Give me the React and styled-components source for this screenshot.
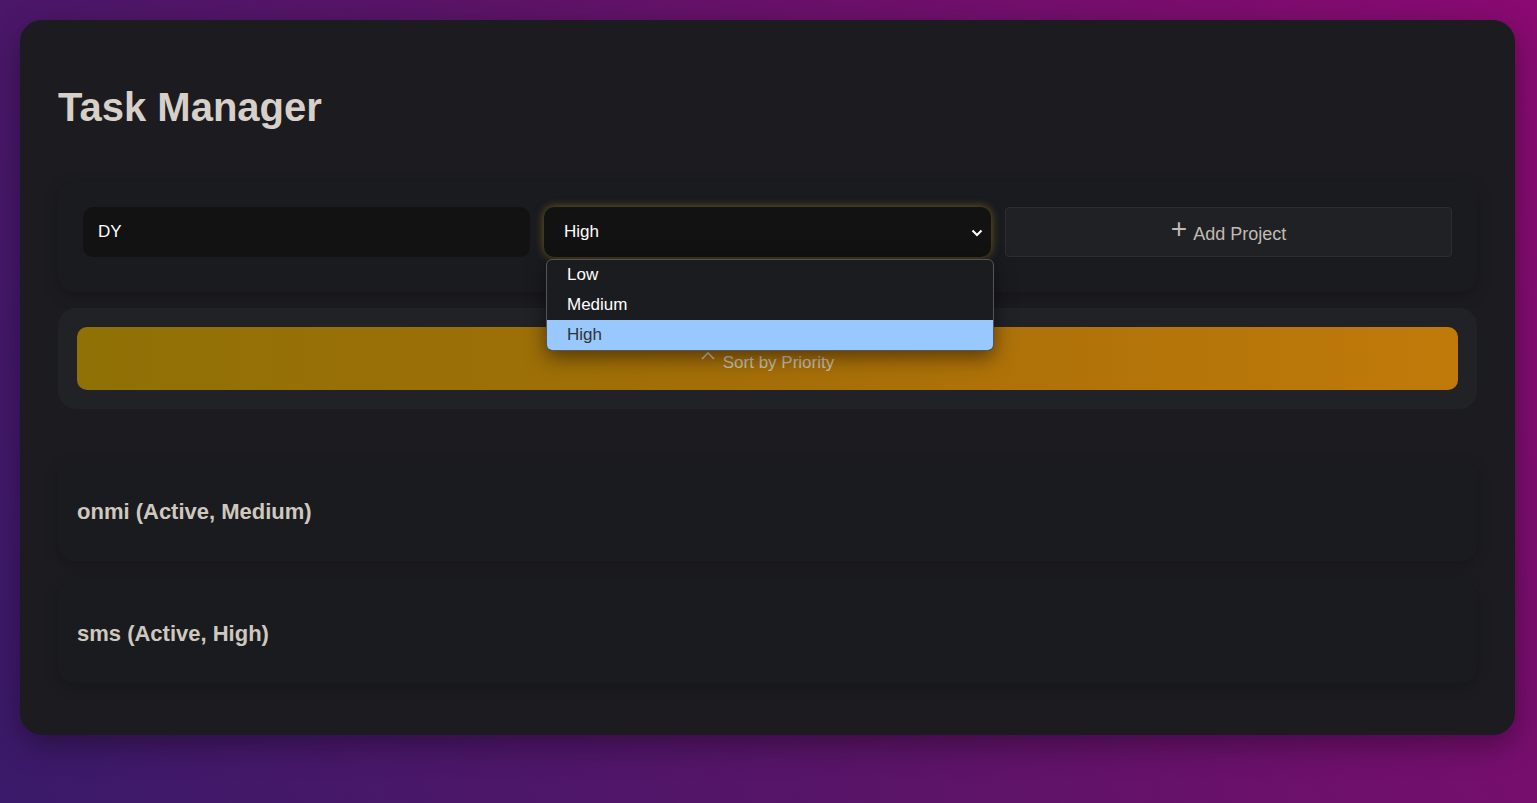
import React from 'react';
import styled, { createGlobalStyle } from 'styled-components';

const Global = createGlobalStyle`
  html, body { margin: 0; height: 100%; }
  body {
    font-family: "Liberation Sans", Arial, sans-serif;
    background: linear-gradient(60deg, #3a1a6a 0%, #5a1468 45%, #8a0a72 100%);
    min-height: 803px;
  }
  * { box-sizing: border-box; }
`;

const Page = styled.div`
  padding: 20px 22px 20px 20px;
`;

const Card = styled.div`
  background: #1c1b20;
  border-radius: 22px;
  padding: 40px 38px 52px;
  box-shadow: 0 10px 30px rgba(0,0,0,0.35);
`;

const Title = styled.h1`
  margin: 26px 0 54px 0;
  font-size: 40px;
  font-weight: 700;
  color: #d6d0c8;
  line-height: 42px;
`;

const Form = styled.div`
  background: #1a1b1e;
  border-radius: 16px;
  padding: 25px 25px 35px;
  display: grid;
  grid-template-columns: 1fr 1fr 1fr;
  gap: 14px;
  box-shadow: 0 4px 16px rgba(0,0,0,0.2);
`;

const Field = styled.div`
  height: 50px;
  border-radius: 10px;
  background: #121212;
  color: #fff;
  font-size: 17px;
  display: flex;
  align-items: center;
  padding: 0 15px;
  position: relative;
  ${p => p.focused && `box-shadow: 0 0 8px rgba(200,160,40,0.5); padding: 0 20px;`}
`;

const Chevron = styled.span`
  margin-left: auto;
  font-size: 13px;
  margin-right: -12px;
`;

const Menu = styled.div`
  position: absolute;
  top: 52px;
  left: 2px;
  right: -3px;
  background: #1b1c1f;
  border: 1px solid #555;
  border-radius: 6px;
  overflow: hidden;
  z-index: 5;
  box-shadow: 0 6px 20px rgba(0,0,0,0.5);
`;

const Option = styled.div`
  height: 30px;
  display: flex;
  align-items: center;
  padding: 0 20px;
  font-size: 17px;
  color: ${p => (p.active ? '#333' : '#fff')};
  background: ${p => (p.active ? '#99c8ff' : 'transparent')};
`;

const AddButton = styled.div`
  height: 50px;
  border: 1px solid #2c2e31;
  border-radius: 4px;
  background: #202124;
  color: #c2bbb2;
  font-size: 18px;
  display: flex;
  align-items: center;
  justify-content: center;
  gap: 6px;
  padding-top: 4px;
`;

const Plus = styled.span`
  font-size: 28px;
  font-weight: 300;
  margin-top: -10px;
`;

const SortPanel = styled.div`
  margin-top: 16px;
  background: #202225;
  border-radius: 18px;
  padding: 19px;
`;

const SortButton = styled.div`
  height: 63px;
  border-radius: 10px;
  background: linear-gradient(90deg, #8f7106 0%, #a56e08 50%, #c07a0a 100%);
  color: #c8c0b0;
  font-size: 17px;
  display: flex;
  align-items: center;
  justify-content: center;
  gap: 8px;
  padding-top: 8px;
`;

const List = styled.div`
  margin-top: 50px;
  display: flex;
  flex-direction: column;
  gap: 20px;
`;

const Project = styled.div`
  height: 102px;
  background: #1a1b1e;
  border-radius: 16px;
  padding: 4px 19px 0;
  display: flex;
  align-items: center;
  font-size: 22px;
  font-weight: 700;
  color: #cfc8be;
  box-shadow: 0 4px 14px rgba(0,0,0,0.2);
`;

export default function App() {
  return (
    <Page>
      <Global />
      <Card>
        <Title>Task Manager</Title>
        <Form>
          <Field>DY</Field>
          <Field focused>
            High
            <Chevron>
              <svg width="12" height="8" viewBox="0 0 12 8"><path d="M1.5 1.5l4.5 4.5 4.5-4.5" stroke="#fff" strokeWidth="2" fill="none" /></svg>
            </Chevron>
            <Menu>
              <Option>Low</Option>
              <Option>Medium</Option>
              <Option active>High</Option>
            </Menu>
          </Field>
          <AddButton><Plus>+</Plus>Add Project</AddButton>
        </Form>
        <SortPanel>
          <SortButton>
            <svg width="14" height="10" viewBox="0 0 14 10" style={{ marginTop: -14 }}><path d="M1 8l6-6 6 6" stroke="#c8c0b0" strokeWidth="1.6" fill="none" /></svg>
            Sort by Priority
          </SortButton>
        </SortPanel>
        <List>
          <Project>onmi (Active, Medium)</Project>
          <Project>sms (Active, High)</Project>
        </List>
      </Card>
    </Page>
  );
}
